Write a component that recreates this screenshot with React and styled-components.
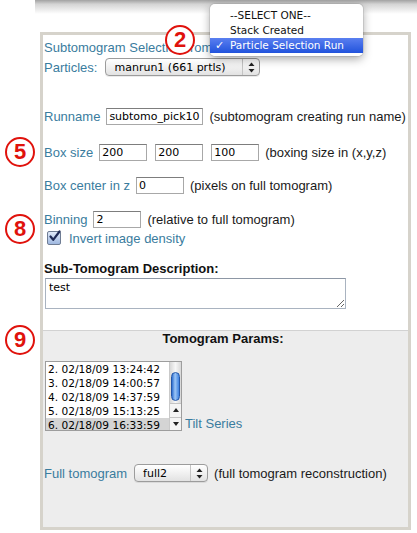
import React from "react";
import styled, { createGlobalStyle } from "styled-components";

const GlobalStyle = createGlobalStyle`
  body {
    margin: 0;
    background: #ffffff;
    font-family: "Liberation Sans", Arial, sans-serif;
  }
`;

const Aqua = `"DejaVu Sans", "Liberation Sans", sans-serif`;

export default function App() {
  return (
    <Page>
      <GlobalStyle />
      <TopShade />
      <Panel>
        <Upper>
          <Row h={20} mt={0}>
            <Label>Subtomogram Selection from</Label>
          </Row>
          <Row h={20} mt={0}>
            <Label>Particles:</Label>
            <FakeSelect w={155} ml={8}>
              <SelectText>manrun1 (661 prtls)</SelectText>
              <Arrows />
            </FakeSelect>
          </Row>

          <Row h={20} mt={29}>
            <Label>Runname</Label>
            <Input w={97} ml={6} defaultValue="subtomo_pick101" />
            <Hint>(subtomogram creating run name)</Hint>
          </Row>
          <Row h={20} mt={16}>
            <Label>Box size</Label>
            <Input w={48} ml={6} defaultValue="200" />
            <Input w={48} ml={8} defaultValue="200" />
            <Input w={48} ml={8} defaultValue="100" />
            <Hint>(boxing size in (x,y,z)</Hint>
          </Row>
          <Row h={20} mt={13}>
            <Label>Box center in z</Label>
            <Input w={48} ml={6} defaultValue="0" />
            <Hint>(pixels on full tomogram)</Hint>
          </Row>
          <Row h={20} mt={14}>
            <Label>Binning</Label>
            <Input w={48} ml={6} defaultValue="2" />
            <Hint>(relative to full tomogram)</Hint>
          </Row>
          <Row h={18} mt={0}>
            <CheckBox>
              <svg width="13" height="13" viewBox="0 0 13 13">
                <path d="M2.5 6.5 L5.2 9.8 L11.5 1.5" fill="none" stroke="#1e2a55" strokeWidth="2.2" strokeLinecap="round" strokeLinejoin="round" />
              </svg>
            </CheckBox>
            <Label>Invert image density</Label>
          </Row>

          <Row h={16} mt={13}>
            <Bold>Sub-Tomogram Description:</Bold>
          </Row>
          <TextArea defaultValue="test" />
        </Upper>

        <Lower>
          <Title>Tomogram Params:</Title>
          <ListRow>
            <ListBox>
              <Items>
                {[
                  "2. 02/18/09 13:24:42",
                  "3. 02/18/09 14:00:57",
                  "4. 02/18/09 14:37:59",
                  "5. 02/18/09 15:13:25",
                  "6. 02/18/09 16:33:59",
                ].map((t, i) => (
                  <Item key={t} selected={i === 4}>{t}</Item>
                ))}
              </Items>
              <ScrollBar>
                <Track>
                  <Thumb />
                </Track>
                <ScrollBtn>
                  <svg width="6" height="4" viewBox="0 0 6 4"><path d="M3 0 L6 4 L0 4 Z" fill="#222" /></svg>
                </ScrollBtn>
                <ScrollBtn>
                  <svg width="6" height="4" viewBox="0 0 6 4"><path d="M0 0 L6 0 L3 4 Z" fill="#222" /></svg>
                </ScrollBtn>
              </ScrollBar>
            </ListBox>
            <Label>Tilt Series</Label>
          </ListRow>
          <Row h={20} mt={32}>
            <Label>Full tomogram</Label>
            <FakeSelect w={74} ml={7}>
              <SelectText>full2</SelectText>
              <Arrows />
            </FakeSelect>
            <Hint>(full tomogram reconstruction)</Hint>
          </Row>
        </Lower>
      </Panel>

      <Menu>
        <MenuItem>--SELECT ONE--</MenuItem>
        <MenuItem>Stack Created</MenuItem>
        <MenuItem active>
          <Check>✓</Check>Particle Selection Run
        </MenuItem>
      </Menu>

      <Badge x={180} y={40}>2</Badge>
      <Badge x={20} y={152}>5</Badge>
      <Badge x={20} y={229}>8</Badge>
      <Badge x={20} y={340}>9</Badge>
    </Page>
  );
}

const Arrows = () => (
  <ArrowBox>
    <svg width="7" height="11" viewBox="0 0 7 11">
      <path d="M3.5 0.5 L6.5 4 L0.5 4 Z" fill="#222" />
      <path d="M0.5 7 L6.5 7 L3.5 10.5 Z" fill="#222" />
    </svg>
  </ArrowBox>
);

const Page = styled.div`
  position: relative;
  width: 417px;
  height: 533px;
  overflow: hidden;
`;

const TopShade = styled.div`
  margin-left: 35px;
  height: 14px;
  background: linear-gradient(#a2a2a2, #d4d4d4 30%, #ffffff);
`;

const Panel = styled.div`
  margin: 18px 0 0 40px;
  width: 371px;
  height: 498px;
  box-sizing: border-box;
  border: 3px solid #d6d3cb;
  display: flex;
  flex-direction: column;
`;

const Upper = styled.div`
  background: #ffffff;
  padding: 2px 0 21px 1px;
  border-bottom: 1px solid #d2d2d2;
`;

const Lower = styled.div`
  flex: 1;
  background: #ededed;
  padding-left: 1px;
`;

const Row = styled.div`
  display: flex;
  align-items: center;
  height: ${(p) => p.h}px;
  margin-top: ${(p) => p.mt}px;
  white-space: nowrap;
`;

const Label = styled.span`
  font-size: 13px;
  color: #3a7c9e;
`;

const Hint = styled.span`
  font-size: 13px;
  color: #1a1a1a;
  margin-left: 6px;
`;

const Bold = styled.span`
  font-size: 13px;
  font-weight: bold;
  color: #111;
`;

const Input = styled.input`
  width: ${(p) => p.w}px;
  margin-left: ${(p) => p.ml}px;
  height: 17px;
  box-sizing: border-box;
  border: 1px solid #a8a8a8;
  border-top-color: #7d7d7d;
  padding: 0 2px;
  font-family: ${Aqua};
  font-size: 11px;
  color: #000;
  background: #fff;
  outline: none;
`;

const FakeSelect = styled.div`
  width: ${(p) => p.w}px;
  margin-left: ${(p) => p.ml}px;
  height: 18px;
  box-sizing: border-box;
  border: 1px solid #9c9c9c;
  border-radius: 4px;
  background: linear-gradient(#ffffff, #f1f1f1 50%, #e2e2e2);
  display: flex;
  align-items: center;
  box-shadow: 0 1px 0 rgba(0, 0, 0, 0.08);
`;

const SelectText = styled.span`
  flex: 1;
  padding-left: 8px;
  font-family: ${Aqua};
  font-size: 11px;
  color: #000;
`;

const ArrowBox = styled.span`
  width: 16px;
  height: 100%;
  border-left: 1px solid #c4c4c4;
  display: flex;
  align-items: center;
  justify-content: center;
`;

const CheckBox = styled.span`
  width: 12px;
  height: 12px;
  margin: 0 8px 0 3px;
  border: 1px solid #6f7d94;
  border-radius: 2px;
  background: linear-gradient(#dfe9f8, #9fb8e0);
  display: flex;
  align-items: center;
  justify-content: center;
  position: relative;
  svg {
    position: absolute;
    left: 0;
    top: -2px;
  }
`;

const TextArea = styled.textarea`
  display: block;
  margin: 2px 0 0 1px;
  width: 301px;
  height: 31px;
  box-sizing: border-box;
  border: 1px solid #a9b3c0;
  border-top-color: #8d97a5;
  padding: 2px 3px;
  font-family: ${Aqua};
  font-size: 11px;
  color: #000;
  resize: both;
  outline: none;
`;

const Title = styled.div`
  text-align: center;
  font-size: 13px;
  font-weight: bold;
  color: #111;
  height: 15px;
  line-height: 15px;
  margin-right: 6px;
`;

const ListRow = styled.div`
  display: flex;
  align-items: flex-end;
  gap: 3px;
  margin: 15px 0 0 1px;
`;

const ListBox = styled.div`
  width: 137px;
  height: 70px;
  box-sizing: border-box;
  border: 1px solid #9d9d9d;
  background: #fff;
  display: flex;
  overflow: hidden;
`;

const Items = styled.div`
  flex: 1;
  overflow: hidden;
`;

const Item = styled.div`
  height: 14px;
  line-height: 14px;
  padding-left: 2px;
  font-family: ${Aqua};
  font-size: 10.6px;
  color: #000;
  white-space: nowrap;
  background: ${(p) => (p.selected ? "#d4d4d4" : "transparent")};
`;

const ScrollBar = styled.div`
  width: 11px;
  display: flex;
  flex-direction: column;
  background: linear-gradient(90deg, #d8d8d8, #f7f7f7 50%, #d8d8d8);
  border-left: 1px solid #c9c9c9;
`;

const Track = styled.div`
  flex: 1;
  padding: 10px 1px 2px;
`;

const Thumb = styled.div`
  height: 29px;
  border-radius: 5px;
  background: linear-gradient(90deg, #2f6fd0, #9cc6f6 45%, #3f82e0);
  border: 1px solid #2457a8;
  box-sizing: border-box;
`;

const ScrollBtn = styled.div`
  height: 13px;
  display: flex;
  align-items: center;
  justify-content: center;
  border-top: 1px solid #c4c4c4;
  background: #f4f4f4;
`;

const Menu = styled.div`
  position: absolute;
  left: 210px;
  top: 4px;
  width: 153px;
  padding: 4px 0 3px;
  background: rgba(255, 255, 255, 0.97);
  border-radius: 5px;
  box-shadow: 0 3px 10px rgba(0, 0, 0, 0.35), 0 0 0 1px rgba(0, 0, 0, 0.08);
`;

const MenuItem = styled.div`
  position: relative;
  height: 15px;
  line-height: 15px;
  padding-left: 20px;
  font-family: ${Aqua};
  font-size: 10.5px;
  color: ${(p) => (p.active ? "#ffffff" : "#111111")};
  background: ${(p) => (p.active ? "linear-gradient(#5a7ff0, #2153dc)" : "transparent")};
  white-space: nowrap;
`;

const Check = styled.span`
  position: absolute;
  left: 5px;
  font-size: 11px;
  font-weight: bold;
`;

const Badge = styled.div`
  position: absolute;
  left: ${(p) => p.x - 15}px;
  top: ${(p) => p.y - 15}px;
  width: 30px;
  height: 30px;
  box-sizing: border-box;
  border: 2.5px solid #e0120c;
  border-radius: 50%;
  background: #ffffff;
  color: #e0120c;
  font-family: "Liberation Sans", Arial, sans-serif;
  font-weight: bold;
  font-size: 22px;
  display: flex;
  align-items: center;
  justify-content: center;
`;
